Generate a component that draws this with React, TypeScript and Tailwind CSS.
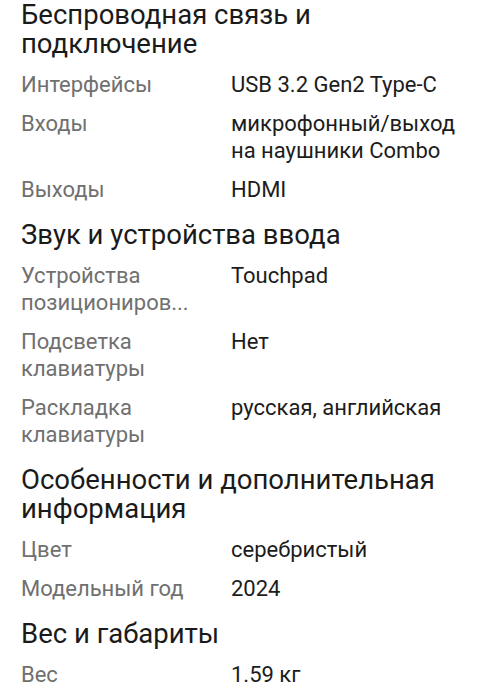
type Spec = { label: string; value: string };

type Section = { title: string; rows: Spec[] };

const sections: Section[] = [
  {
    title: "Беспроводная связь и подключение",
    rows: [
      { label: "Интерфейсы", value: "USB 3.2 Gen2 Type-C" },
      { label: "Входы", value: "микрофонный/выход на наушники Combo" },
      { label: "Выходы", value: "HDMI" },
    ],
  },
  {
    title: "Звук и устройства ввода",
    rows: [
      { label: "Устройства позициониров...", value: "Touchpad" },
      { label: "Подсветка клавиатуры", value: "Нет" },
      { label: "Раскладка клавиатуры", value: "русская, английская" },
    ],
  },
  {
    title: "Особенности и дополнительная информация",
    rows: [
      { label: "Цвет", value: "серебристый" },
      { label: "Модельный год", value: "2024" },
    ],
  },
  {
    title: "Вес и габариты",
    rows: [{ label: "Вес", value: "1.59 кг" }],
  },
];

function SpecRow({ label, value }: Spec) {
  return (
    <div className="flex gap-[18px] text-[22px] leading-[27px]">
      <div className="w-[192px] shrink-0 text-[#707070]">{label}</div>
      <div className="flex-1 text-[#1c1c1c]">{value}</div>
    </div>
  );
}

export default function App() {
  return (
    <div
      className="w-[482px] h-[700px] overflow-hidden bg-white pl-[21px] pr-5 flex flex-col gap-[17px]"
      style={{ fontFamily: "Roboto, 'Noto Sans', sans-serif" }}
    >
      {sections.map((s) => (
        <div key={s.title}>
          <h2 className="text-[27.5px] leading-[29px] text-[#1a1a1a] font-normal">{s.title}</h2>
          <div className="mt-[13px] flex flex-col gap-3">
            {s.rows.map((r) => (
              <SpecRow key={r.label} {...r} />
            ))}
          </div>
        </div>
      ))}
    </div>
  );
}
